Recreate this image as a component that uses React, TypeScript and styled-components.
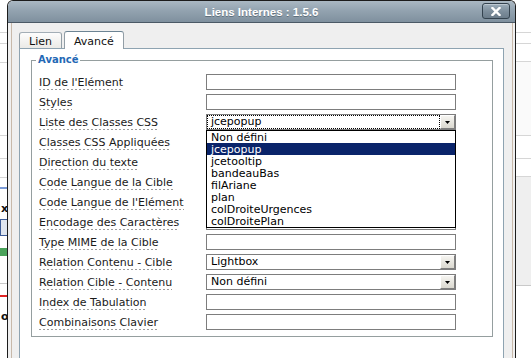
import React from 'react';
import styled, { createGlobalStyle } from 'styled-components';

type Field = {
  label: string;
  type: 'text' | 'select';
  value?: string;
  focused?: boolean;
};

const FIELDS: Field[] = [
  { label: "ID de l'Elément", type: 'text' },
  { label: 'Styles', type: 'text' },
  { label: 'Liste des Classes CSS', type: 'select', value: 'jcepopup', focused: true },
  { label: 'Classes CSS Appliquées', type: 'text' },
  { label: 'Direction du texte', type: 'select', value: '' },
  { label: 'Code Langue de la Cible', type: 'text' },
  { label: "Code Langue de l'Elément", type: 'text' },
  { label: 'Encodage des Caractères', type: 'text' },
  { label: 'Type MIME de la Cible', type: 'text' },
  { label: 'Relation Contenu - Cible', type: 'select', value: 'Lightbox' },
  { label: 'Relation Cible - Contenu', type: 'select', value: 'Non défini' },
  { label: 'Index de Tabulation', type: 'text' },
  { label: 'Combinaisons Clavier', type: 'text' },
];

const CLASS_OPTIONS = [
  'Non défini',
  'jcepopup',
  'jcetooltip',
  'bandeauBas',
  'filAriane',
  'plan',
  'colDroiteUrgences',
  'colDroitePlan',
];

// page lying behind the popup, only its edges show
type StripeDef = { h: number; line?: string; bg?: string; thick?: number };

const LEFT_STRIPES: StripeDef[] = [
  { h: 33, line: '#d6d6d6' },
  { h: 11, line: '#d6d6d6' },
  { h: 19, line: '#d6d6d6' },
  { h: 73, line: '#d6d6d6' },
  { h: 23, line: '#d6d6d6' },
  { h: 19, line: '#d6d6d6' },
];

const RIGHT_STRIPES: StripeDef[] = [
  { h: 33, line: '#d6d6d6' },
  { h: 11, line: '#d6d6d6' },
  { h: 18, line: '#d6d6d6' },
  { h: 74, line: '#d6d6d6', bg: '#fafafa' },
  { h: 23, line: '#d6d6d6' },
  { h: 18, line: '#d6d6d6' },
  { h: 109, line: '#c9c9c9', bg: '#efefef' },
];

const App: React.FC = () => {
  return (
    <>
      <GlobalStyle />
      <Page>
        <Strip $w={7}>
          {LEFT_STRIPES.map((s, i) => (
            <Stripe key={i} $h={s.h} $line={s.line} $bg={s.bg} />
          ))}
          <Stripe $h={106} $line='#c9c9c9'>
            <Bit $h={2} $mt={9} $bg='#7b9bd6' />
            <Cross>x</Cross>
            <Bit $h={17} $mt={4} $bg='#dfe5ef' $border='#3d5c98' />
            <Bit $h={8} $mt={12} $bg='#4aa25a' />
          </Stripe>
          <Stripe $h={13} $line='#e02424' $thick={2} />
          <Cross>o</Cross>
        </Strip>

        <Strip $w={15}>
          {RIGHT_STRIPES.map((s, i) => (
            <Stripe key={i} $h={s.h} $line={s.line} $bg={s.bg} />
          ))}
        </Strip>

        <Dialog>
          <TitleBar>
            <Title>Liens Internes : 1.5.6</Title>
            <CloseButton aria-label='Fermer'>
              <svg width='10' height='9' viewBox='0 0 10 9'>
                <path d='M1.5 1l7 7M8.5 1l-7 7' stroke='#fff' strokeWidth='2.4' strokeLinecap='square' />
              </svg>
            </CloseButton>
          </TitleBar>

          <Body>
            <TabBar>
              <Tab>Lien</Tab>
              <Tab $active>Avancé</Tab>
            </TabBar>

            <Panel>
              <Fieldset>
                <Legend>Avancé</Legend>
                <FieldGrid>
                  {FIELDS.map((f) => (
                    <React.Fragment key={f.label}>
                      <Label>{f.label}</Label>
                      <Cell>
                        {f.type === 'text' ? (
                          <TextInput readOnly value='' />
                        ) : (
                          <SelectBox>
                            <SelectValue $focused={f.focused}>{f.value}</SelectValue>
                            <ArrowButton>
                              <svg width='5' height='3' viewBox='0 0 5 3'>
                                <path d='M0 0h5L2.5 3z' fill='#000' />
                              </svg>
                            </ArrowButton>
                          </SelectBox>
                        )}
                        {f.focused && (
                          <Dropdown>
                            {CLASS_OPTIONS.map((o) => (
                              <Option key={o} $selected={o === f.value}>
                                {o}
                              </Option>
                            ))}
                          </Dropdown>
                        )}
                      </Cell>
                    </React.Fragment>
                  ))}
                </FieldGrid>
              </Fieldset>
            </Panel>
          </Body>
        </Dialog>
      </Page>
    </>
  );
};

const GlobalStyle = createGlobalStyle`
  html, body {
    margin: 0;
    padding: 0;
    background: #fff;
  }
  body {
    font-family: 'DejaVu Sans', Verdana, sans-serif;
    overflow: hidden;
  }
`;

const Page = styled.div`
  position: relative;
  width: 531px;
  height: 358px;
  overflow: hidden;
  display: flex;
  justify-content: space-between;
  background: #fff;
`;

const Strip = styled.div<{ $w: number }>`
  width: ${(p) => p.$w}px;
  display: flex;
  flex-direction: column;
`;

const Stripe = styled.div<{ $h: number; $line?: string; $bg?: string; $thick?: number }>`
  flex: none;
  box-sizing: border-box;
  height: ${(p) => p.$h}px;
  background: ${(p) => p.$bg || '#fff'};
  border-bottom: ${(p) => (p.$line ? `${p.$thick || 1}px solid ${p.$line}` : 'none')};
  display: flex;
  flex-direction: column;
  overflow: hidden;
`;

const Bit = styled.div<{ $h: number; $mt: number; $bg: string; $border?: string }>`
  flex: none;
  box-sizing: border-box;
  height: ${(p) => p.$h}px;
  margin-top: ${(p) => p.$mt}px;
  background: ${(p) => p.$bg};
  border: ${(p) => (p.$border ? `1px solid ${p.$border}` : 'none')};
  border-right: none;
`;

const Cross = styled.div`
  font: bold 11px 'DejaVu Sans', sans-serif;
  line-height: 12px;
  margin: 14px 0 0 1px;
  color: #111;
`;

const Dialog = styled.div`
  position: absolute;
  left: 7px;
  top: 0;
  width: 509px;
  height: 372px;
  box-sizing: border-box;
  border: 1px solid #1c1c1c;
  border-bottom: none;
  border-radius: 6px 6px 0 0;
  overflow: hidden;
  background: #f0f0f0;
  display: flex;
  flex-direction: column;
`;

const TitleBar = styled.div`
  flex: none;
  height: 22px;
  box-sizing: border-box;
  border-bottom: 1px solid #4b5966;
  background: linear-gradient(#aab8c3, #93a3b0 45%, #7f909e);
  display: grid;
  grid-template-columns: 1fr auto 1fr;
  align-items: start;
`;

const Title = styled.div`
  grid-column: 2;
  padding-top: 4px;
  font: bold 11.5px 'Liberation Sans', Arial, sans-serif;
  line-height: 14px;
  color: #fff;
  white-space: nowrap;
  text-shadow: 0 1px 0 rgba(45, 60, 72, 0.45);
`;

const CloseButton = styled.button`
  grid-column: 3;
  justify-self: end;
  margin: 2px 5px 0 0;
  width: 28px;
  height: 16px;
  padding: 0;
  box-sizing: border-box;
  border: 1px solid #34434f;
  border-radius: 3px;
  background: linear-gradient(#9cadba, #7c8d9b 55%, #6c7d8b);
  box-shadow: inset 0 1px 0 rgba(255, 255, 255, 0.35);
  display: flex;
  align-items: center;
  justify-content: center;
`;

const Body = styled.div`
  flex: 1;
  margin: 0 2px 0 3px;
  border-left: 1px solid #c8b9aa;
  border-right: 1px solid #c8b9aa;
  background: #efefef;
  padding: 8px 8px 0 7px;
  display: flex;
  flex-direction: column;
`;

const TabBar = styled.div`
  display: flex;
  align-items: flex-end;
  gap: 2px;
  position: relative;
  z-index: 1;
  margin-bottom: -1px;
`;

const Tab = styled.div<{ $active?: boolean }>`
  height: ${(p) => (p.$active ? 18 : 16)}px;
  margin-bottom: ${(p) => (p.$active ? 0 : 1)}px;
  box-sizing: border-box;
  padding: 2px 9px 0;
  border: 1px solid #929ea6;
  border-bottom: none;
  border-top-color: ${(p) => (p.$active ? '#6c8494' : '#a3aeb6')};
  border-radius: 3px 3px 0 0;
  background: ${(p) => (p.$active ? '#fff' : 'linear-gradient(#fdfdfd, #ebeae6)')};
  font: 11px 'DejaVu Sans', Verdana, sans-serif;
  line-height: 13px;
  color: #111;
  display: flex;
  align-items: center;
`;

const Panel = styled.div`
  flex: 1;
  background: #fff;
  border: 1px solid #8ea3b1;
  padding: 5px 10px 0 11px;
`;

const Fieldset = styled.fieldset`
  margin: 0;
  padding: 0 0 4px 0;
  border: 1px solid #959e9f;
  min-width: 0;
`;

const Legend = styled.legend`
  margin-left: 4px;
  padding: 0 2px;
  font: bold 10px 'DejaVu Sans', Verdana, sans-serif;
  line-height: 12px;
  color: #2368b5;
`;

const FieldGrid = styled.div`
  display: grid;
  grid-template-columns: 167px 250px;
  grid-auto-rows: 20px;
  padding: 6px 0 0 7px;
`;

const Label = styled.span`
  align-self: end;
  justify-self: start;
  margin-bottom: 2px;
  padding-bottom: 1px;
  font: 11px 'DejaVu Sans', Verdana, sans-serif;
  line-height: 13px;
  color: #1a1a1a;
  white-space: nowrap;
  background: repeating-linear-gradient(90deg, #9c9c9c 0 2px, transparent 2px 4px) left bottom / 100% 1px
    no-repeat;
`;

const Cell = styled.div`
  position: relative;
  align-self: center;
  height: 16px;
`;

const TextInput = styled.input`
  display: block;
  width: 250px;
  height: 16px;
  box-sizing: border-box;
  margin: 0;
  padding: 0 3px;
  border: 1px solid #7d7d7d;
  background: #fff;
  outline: none;
`;

const SelectBox = styled.div`
  width: 250px;
  height: 16px;
  box-sizing: border-box;
  border: 1px solid #7d7d7d;
  background: #fff;
  display: flex;
`;

const SelectValue = styled.div<{ $focused?: boolean }>`
  flex: 1;
  box-sizing: border-box;
  padding-left: 3px;
  border: 1px dotted ${(p) => (p.$focused ? '#000' : 'transparent')};
  font: 11px 'DejaVu Sans', Verdana, sans-serif;
  line-height: 12px;
  color: #000;
  white-space: nowrap;
  overflow: hidden;
`;

const ArrowButton = styled.div`
  flex: none;
  width: 15px;
  height: 14px;
  box-sizing: border-box;
  border: 1px solid;
  border-color: #fff #7f7f7f #7f7f7f #fff;
  background: linear-gradient(#f6f5f1, #dad8cf);
  display: flex;
  align-items: center;
  justify-content: center;
  padding-top: 1px;
`;

const Dropdown = styled.ul`
  position: absolute;
  left: 0;
  top: 16px;
  z-index: 2;
  width: 250px;
  box-sizing: border-box;
  margin: 0;
  padding: 0;
  list-style: none;
  border: 1px solid #000;
  background: #fff;
`;

const Option = styled.li<{ $selected?: boolean }>`
  height: 12px;
  line-height: 12px;
  padding-left: 4px;
  font: 11px 'DejaVu Sans', Verdana, sans-serif;
  white-space: nowrap;
  color: ${(p) => (p.$selected ? '#fff' : '#000')};
  background: ${(p) => (p.$selected ? '#0a246a' : 'transparent')};
`;

export default App;
